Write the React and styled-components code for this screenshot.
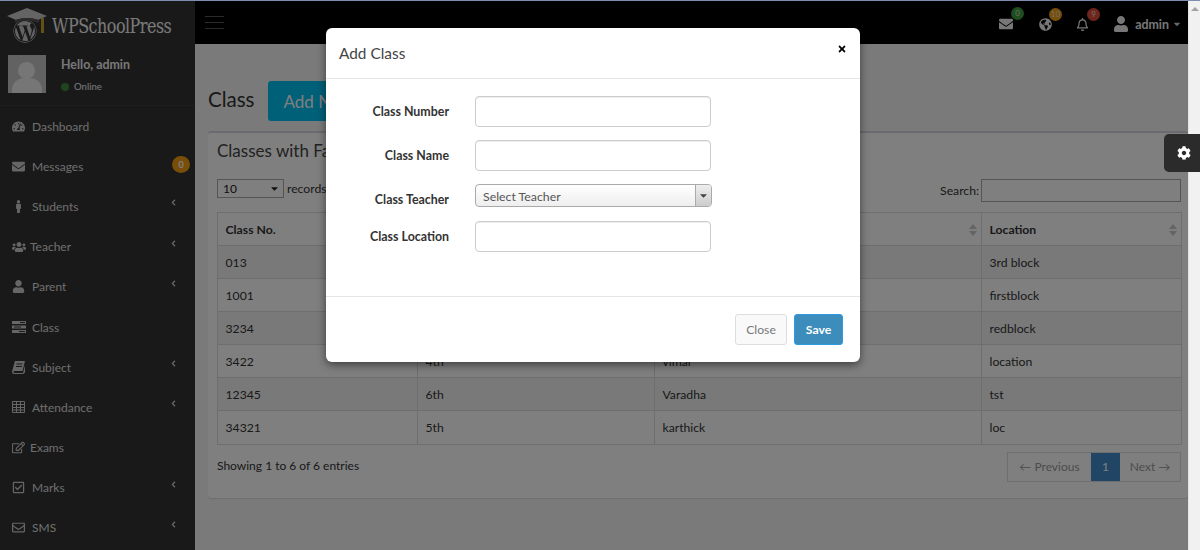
import React from "react";
import styled, { createGlobalStyle } from "styled-components";
import {
  FaCaretDown,
  FaChevronLeft,
  FaCog,
  FaEnvelope,
  FaGlobeAmericas,
  FaMale,
  FaRegBell,
  FaRegCheckSquare,
  FaRegEdit,
  FaRegEnvelope,
  FaTachometerAlt,
  FaTimes,
  FaUser,
  FaUsers,
  FaWordpress,
} from "react-icons/fa";

const font = `Lato, "Noto Sans", sans-serif`;

const GlobalStyle = createGlobalStyle`
  html, body {
    margin: 0;
    height: 100%;
    overflow: hidden;
    background: #f1f1f1;
    font-family: ${font};
  }
  * { box-sizing: border-box; }
`;

const Screen = styled.div`
  position: relative;
  display: flex;
  width: 1200px;
  height: 550px;
  overflow: hidden;
  border-top: 1px solid #7f8db0;
`;

const Page = styled.div`
  position: relative;
  display: flex;
  width: 1188px;
  height: 100%;
  background: #f4f4f4;
`;

const Scrollbar = styled.div`
  display: flex;
  justify-content: center;
  width: 12px;
  padding-top: 6px;
  background: #f1f1f1;
  border-left: 1px solid #e4e4e4;
`;

const ScrollArrow = styled.span`
  width: 0;
  height: 0;
  border-left: 4px solid transparent;
  border-right: 4px solid transparent;
  border-bottom: 4px solid #a3a3a3;
`;

const Sidebar = styled.aside`
  flex: 0 0 195px;
  background: #333;
  overflow: hidden;
`;

const Brand = styled.div`
  display: flex;
  align-items: flex-start;
  height: 48px;
  padding: 7px 0 0 7px;
`;

const LogoMark = styled.div`
  position: relative;
  width: 40px;
  height: 35px;
  color: #c8c8c8;
  flex: none;
`;

const LogoCap = styled.svg`
  position: absolute;
  left: 0;
  top: 0;
`;

const LogoW = styled(FaWordpress)`
  position: absolute;
  left: 6px;
  top: 11px;
  font-size: 24px;
  color: #c8c8c8;
  background: #333;
  border-radius: 50%;
`;

const BrandName = styled.span`
  margin: 4px 0 0 5px;
  font-family: "DejaVu Serif Condensed", "DejaVu Serif", serif;
  font-size: 21px;
  line-height: 28px;
  color: #f2f2f2;
  letter-spacing: -0.6px;
  white-space: nowrap;
  transform: scaleX(0.845);
  transform-origin: left center;
`;

const UserPanel = styled.div`
  display: flex;
  height: 57px;
  padding: 6px 0 0 8px;
  border-bottom: 1px solid #3d3d3d;
`;

const AvatarBox = styled.div`
  position: relative;
  width: 38px;
  height: 38px;
  background: #c4c4c4;
  overflow: hidden;
  flex: none;
`;

const AvatarHead = styled.span`
  position: absolute;
  left: 10px;
  top: 7px;
  width: 17px;
  height: 17px;
  border-radius: 50%;
  background: #ececec;
`;

const AvatarBody = styled.span`
  position: absolute;
  left: 4px;
  top: 23px;
  width: 30px;
  height: 20px;
  border-radius: 12px 12px 0 0;
  background: #ececec;
`;

const UserInfo = styled.div`
  margin-left: 15px;
  color: #eee;
`;

const UserName = styled.div`
  font-size: 12.4px;
  font-weight: 700;
  line-height: 20px;
`;

const UserStatus = styled.div`
  display: flex;
  align-items: center;
  gap: 5px;
  margin-top: 4px;
  font-size: 9.6px;
  line-height: 16px;
`;

const StatusDot = styled.span`
  width: 8px;
  height: 8px;
  border-radius: 50%;
  background: #3c8a3c;
`;

const Menu = styled.nav`
  padding-top: 0;
`;

const MenuItem = styled.div`
  position: relative;
  display: flex;
  align-items: center;
  height: 40.2px;
  padding-left: 12px;
  font-size: 12px;
  color: #ddd;
`;

const MenuIcon = styled.span`
  display: flex;
  align-items: center;
  width: ${(p) => (p.$narrow ? "18px" : "20px")};
  font-size: ${(p) => (p.$large ? "14px" : "13px")};
  color: #ccc;
`;

const MenuChevron = styled(FaChevronLeft)`
  position: absolute;
  right: 18px;
  top: 13px;
  font-size: 7px;
  color: #ddd;
`;

const MenuBadge = styled.span`
  position: absolute;
  right: 5px;
  top: 10px;
  width: 18px;
  height: 17px;
  border-radius: 50%;
  background: #f39c12;
  color: #fff;
  font-size: 9px;
  font-weight: 700;
  line-height: 17px;
  text-align: center;
`;

const Main = styled.main`
  flex: 1;
  min-width: 0;
`;

const TopBar = styled.header`
  display: flex;
  align-items: center;
  justify-content: space-between;
  height: 43px;
  background: #000;
  padding: 0 6px 0 10px;
`;

const Burger = styled.div`
  display: flex;
  flex-direction: column;
  gap: 5px;
  width: 19px;
`;

const BurgerLine = styled.span`
  height: 1px;
  background: #555;
`;

const TopIcons = styled.div`
  display: flex;
  align-items: center;
  padding-top: 3px;
  color: #eee;
`;

const TopIcon = styled.div`
  position: relative;
  display: flex;
  margin-right: ${(p) => p.$gap}px;
  font-size: ${(p) => p.$size || 13}px;
`;

const TopBadge = styled.span`
  position: absolute;
  left: ${(p) => p.$left}px;
  top: -10px;
  width: 13px;
  height: 13px;
  border-radius: 50%;
  background: ${(p) => p.$color};
  color: #ddd;
  font-size: 8px;
  line-height: 13px;
  text-align: center;
`;

const TopUser = styled.div`
  display: flex;
  align-items: center;
  gap: 6px;
  font-size: 12.4px;
  font-weight: 700;
`;

const TopUserIcon = styled(FaUser)`
  font-size: 16px;
`;

const Caret = styled(FaCaretDown)`
  margin-left: -3px;
  font-size: 10px;
  color: #ccc;
`;

const Content = styled.div`
  padding: 37px 0 0 13px;
`;

const TitleRow = styled.div`
  display: flex;
  align-items: center;
  gap: 14px;
  height: 40px;
`;

const PageTitle = styled.h1`
  margin: -5px 0 0;
  font-size: 20.5px;
  font-weight: 400;
  color: #333;
`;

const AddButton = styled.button`
  width: 110px;
  height: 40px;
  padding: 0 0 0 15px;
  border: 0;
  border-radius: 3px;
  background: #00c0ef;
  color: #fff;
  font-family: ${font};
  font-size: 17px;
  text-align: left;
  white-space: nowrap;
`;

const Box = styled.section`
  height: 367px;
  margin-top: 10px;
  padding: 0 7px 0 9px;
  background: #fff;
  border-top: 2px solid #d2d6de;
  border-radius: 3px;
  box-shadow: 0 1px 1px rgba(0, 0, 0, 0.1);
`;

const BoxTitle = styled.h3`
  margin: 0;
  padding-top: 6px;
  font-size: 17px;
  line-height: 24px;
  font-weight: 400;
  color: #444;
  white-space: nowrap;
`;

const TableTools = styled.div`
  display: flex;
  align-items: flex-start;
  justify-content: space-between;
  margin-top: 16px;
  font-size: 12.2px;
  color: #333;
`;

const LengthControl = styled.div`
  display: flex;
  align-items: center;
  gap: 3px;
`;

const LengthSelect = styled.div`
  display: flex;
  align-items: center;
  justify-content: space-between;
  width: 67px;
  height: 19px;
  padding: 0 3px 0 5px;
  background: #fff;
  border: 1px solid #aaa;
  font-size: 12px;
  color: #222;
`;

const SearchControl = styled.label`
  display: flex;
  align-items: center;
  gap: 2px;
`;

const SearchInput = styled.div`
  width: 200px;
  height: 23px;
  background: #fff;
  border: 1px solid #aaa;
`;

const DataTable = styled.table`
  width: 964px;
  margin-top: 10px;
  border-collapse: collapse;
  table-layout: fixed;
  font-size: 12.2px;
  color: #333;

  th, td {
    height: 33.1px;
    padding: 0 7.5px;
    border: 1px solid #ddd;
    text-align: left;
  }
  th { position: relative; height: 33px; font-weight: 700; }
  tbody tr:nth-child(odd) td { background: #f3f3f3; }
`;

const SortIcon = styled.span`
  position: absolute;
  right: 4px;
  top: 11px;
  display: flex;
  flex-direction: column;
  gap: 2px;

  &::before, &::after {
    content: "";
    border-left: 4px solid transparent;
    border-right: 4px solid transparent;
  }
  &::before { border-bottom: 5px solid #c8c8c8; }
  &::after { border-top: 5px solid #c8c8c8; }
`;

const TableFooter = styled.div`
  display: flex;
  align-items: flex-start;
  justify-content: space-between;
  margin-top: 7px;
  font-size: 12px;
  color: #333;
`;

const FooterText = styled.div`
  margin-top: 6px;
`;

const Pager = styled.div`
  display: flex;
  height: 30px;
  border: 1px solid #ddd;
  color: #999;
`;

const PagerItem = styled.span`
  display: flex;
  align-items: center;
  justify-content: center;
  width: ${(p) => p.$width}px;
  background: ${(p) => (p.$active ? "#428bca" : "transparent")};
  color: ${(p) => (p.$active ? "#fff" : "#999")};
`;

const GearTab = styled.div`
  position: absolute;
  top: 133px;
  left: 1164px;
  display: flex;
  align-items: center;
  justify-content: center;
  width: 36px;
  height: 38px;
  padding-left: 4px;
  background: #2b2b2b;
  border-radius: 5px 0 0 5px;
  color: #fff;
  font-size: 14px;
  z-index: 3;
`;

const Backdrop = styled.div`
  position: absolute;
  inset: -1px 0 0 0;
  background: rgba(0, 0, 0, 0.5);
  z-index: 1;
`;

const Modal = styled.div`
  position: absolute;
  left: 326px;
  top: 27px;
  width: 534px;
  height: 334px;
  background: #fff;
  border-radius: 6px;
  box-shadow: 0 3px 9px rgba(0, 0, 0, 0.5);
  z-index: 2;
`;

const ModalHeader = styled.div`
  display: flex;
  justify-content: space-between;
  height: 51px;
  padding: 15px 13px;
  border-bottom: 1px solid #e5e5e5;
`;

const ModalTitle = styled.h4`
  margin: 0;
  font-size: 15.4px;
  line-height: 21px;
  font-weight: 400;
  color: #444;
`;

const CloseX = styled(FaTimes)`
  margin: 1px 0 0;
  font-size: 10px;
  color: #000;
`;

const ModalBody = styled.div`
  display: flex;
  flex-direction: column;
  height: 218px;
  padding-top: 17px;
  border-bottom: 1px solid #e5e5e5;
`;

const FieldRow = styled.div`
  display: flex;
  align-items: center;
  margin-bottom: ${(p) => p.$gap}px;
`;

const FieldLabel = styled.label`
  width: 123px;
  padding-top: ${(p) => p.$drop || 0}px;
  font-size: 12.4px;
  font-weight: 700;
  color: #333;
  text-align: right;
`;

const FieldInput = styled.div`
  width: 236px;
  height: 31px;
  margin-left: 26px;
  border: 1px solid #ccc;
  border-radius: 4px;
  box-shadow: inset 0 1px 1px rgba(0, 0, 0, 0.075);
`;

const FieldSelect = styled.div`
  display: flex;
  align-items: center;
  justify-content: space-between;
  width: 237px;
  height: 23px;
  margin-left: 26px;
  padding-left: 7px;
  background: linear-gradient(#fff, #eee);
  border: 1px solid #aaa;
  border-radius: 4px;
  font-size: 12.3px;
  color: #555;
`;

const SelectText = styled.span`
  padding-top: 2px;
`;

const SelectArrow = styled.span`
  display: flex;
  align-items: center;
  justify-content: center;
  width: 16px;
  height: 100%;
  background: linear-gradient(#eee, #ccc);
  border-left: 1px solid #aaa;
  border-radius: 0 3px 3px 0;
  font-size: 11px;
  color: #444;
`;

const ModalFooter = styled.div`
  display: flex;
  justify-content: flex-end;
  gap: 7px;
  padding: 17px 17px 0 0;
`;

const FooterButton = styled.button`
  width: ${(p) => p.$width}px;
  height: 31px;
  padding: 0;
  background: ${(p) => (p.$primary ? "#3c8dbc" : "#f9f9f9")};
  border: 1px solid ${(p) => (p.$primary ? "#2e9be0" : "#ddd")};
  border-radius: 3px;
  color: ${(p) => (p.$primary ? "#fff" : "#777")};
  font-family: ${font};
  font-size: 12.2px;
  font-weight: ${(p) => (p.$primary ? 700 : 400)};
`;

const ClassIcon = () => (
  <svg width="14" height="12" viewBox="0 0 14 12" fill="currentColor">
    <path d="M0 0h14v3H0zM0 4.5h14v3H0zM0 9h14v3H0z" />
    <path d="M8 1h5v1H8zM2 5.5h7v1H2zM7 10h6v1H7z" fill="#333" />
  </svg>
);

const BookIcon = () => (
  <svg width="13" height="13" viewBox="0 0 13 13" fill="currentColor">
    <path d="M3 0h10L10.5 10H2.5a1 1 0 0 0 0 2h8.5L13 4.5v7L11 13H2Q0 13 0 10.5z" />
    <path d="M4.5 2.5h6v1h-6zM4 5h6v1H4z" fill="#333" />
  </svg>
);

const TableIcon = () => (
  <svg width="13" height="12" viewBox="0 0 13 12" fill="none" stroke="currentColor">
    <path d="M.5.5h12v11H.5zM.5 3.5h12M.5 6.5h12M.5 9h12M4.5.5v11M8.5.5v11" />
  </svg>
);

const menu = [
  { label: "Dashboard", Icon: FaTachometerAlt },
  { label: "Messages", Icon: FaEnvelope, badge: "0" },
  { label: "Students", Icon: FaMale, sub: true },
  { label: "Teacher", Icon: FaUsers, sub: true, narrow: true, large: true },
  { label: "Parent", Icon: FaUser, sub: true },
  { label: "Class", Icon: ClassIcon },
  { label: "Subject", Icon: BookIcon, sub: true },
  { label: "Attendance", Icon: TableIcon, sub: true },
  { label: "Exams", Icon: FaRegEdit, narrow: true },
  { label: "Marks", Icon: FaRegCheckSquare, sub: true },
  { label: "SMS", Icon: FaRegEnvelope, sub: true },
];

const rows = [
  ["013", "", "", "3rd block"],
  ["1001", "", "", "firstblock"],
  ["3234", "", "", "redblock"],
  ["3422", "4th", "vimal", "location"],
  ["12345", "6th", "Varadha", "tst"],
  ["34321", "5th", "karthick", "loc"],
];

const Logo = () => (
  <LogoMark>
    <LogoW />
    <LogoCap width="40" height="26" viewBox="0 0 40 26">
      <path d="M20 0 L40 8 L31 12 Q20 8 9 12 L0 8 Z" fill="currentColor" />
      <path d="M8 12 Q20 8 32 12 V15 Q20 10 8 15 Z" fill="#555" />
      <path d="M35.5 10 V25" stroke="#c9a227" strokeWidth="3" />
    </LogoCap>
  </LogoMark>
);

export default function App() {
  return (
    <>
      <GlobalStyle />
      <Screen>
        <Page>
          <Sidebar>
            <Brand>
              <Logo />
              <BrandName>WPSchoolPress</BrandName>
            </Brand>
            <UserPanel>
              <AvatarBox>
                <AvatarHead />
                <AvatarBody />
              </AvatarBox>
              <UserInfo>
                <UserName>Hello, admin</UserName>
                <UserStatus>
                  <StatusDot />
                  Online
                </UserStatus>
              </UserInfo>
            </UserPanel>
            <Menu>
              {menu.map(({ label, Icon, sub, badge, narrow, large }) => (
                <MenuItem key={label}>
                  <MenuIcon $narrow={narrow} $large={large}>
                    <Icon />
                  </MenuIcon>
                  {label}
                  {sub && <MenuChevron />}
                  {badge && <MenuBadge>{badge}</MenuBadge>}
                </MenuItem>
              ))}
            </Menu>
          </Sidebar>
          <Main>
            <TopBar>
              <Burger>
                <BurgerLine />
                <BurgerLine />
                <BurgerLine />
              </Burger>
              <TopIcons>
                <TopIcon $gap={26} $size={14}>
                  <FaEnvelope />
                  <TopBadge $left={12} $color="#3c9a3c">0</TopBadge>
                </TopIcon>
                <TopIcon $gap={24}>
                  <FaGlobeAmericas />
                  <TopBadge $left={10} $color="#f39c12">10</TopBadge>
                </TopIcon>
                <TopIcon $gap={24}>
                  <FaRegBell />
                  <TopBadge $left={11} $color="#dd4b39">9</TopBadge>
                </TopIcon>
                <TopUser>
                  <TopUserIcon />
                  admin
                  <Caret />
                </TopUser>
              </TopIcons>
            </TopBar>
            <Content>
              <TitleRow>
                <PageTitle>Class</PageTitle>
                <AddButton>Add New</AddButton>
              </TitleRow>
              <Box>
                <BoxTitle>Classes with Faculty</BoxTitle>
                <TableTools>
                  <LengthControl>
                    <LengthSelect>
                      10
                      <FaCaretDown size={11} />
                    </LengthSelect>
                    records
                  </LengthControl>
                  <SearchControl>
                    Search:
                    <SearchInput />
                  </SearchControl>
                </TableTools>
                <DataTable>
                  <colgroup>
                    <col width="200" />
                    <col width="237" />
                    <col width="327" />
                    <col width="200" />
                  </colgroup>
                  <thead>
                    <tr>
                      <th>Class No.<SortIcon /></th>
                      <th><SortIcon /></th>
                      <th><SortIcon /></th>
                      <th>Location<SortIcon /></th>
                    </tr>
                  </thead>
                  <tbody>
                    {rows.map((row) => (
                      <tr key={row[0]}>
                        {row.map((cell, i) => (
                          <td key={i}>{cell}</td>
                        ))}
                      </tr>
                    ))}
                  </tbody>
                </DataTable>
                <TableFooter>
                  <FooterText>Showing 1 to 6 of 6 entries</FooterText>
                  <Pager>
                    <PagerItem $width={83}>← Previous</PagerItem>
                    <PagerItem $width={29} $active>1</PagerItem>
                    <PagerItem $width={60}>Next →</PagerItem>
                  </Pager>
                </TableFooter>
              </Box>
            </Content>
          </Main>
          <Backdrop />
          <Modal>
            <ModalHeader>
              <ModalTitle>Add Class</ModalTitle>
              <CloseX />
            </ModalHeader>
            <ModalBody>
              <FieldRow $gap={13}>
                <FieldLabel>Class Number</FieldLabel>
                <FieldInput />
              </FieldRow>
              <FieldRow $gap={13}>
                <FieldLabel>Class Name</FieldLabel>
                <FieldInput />
              </FieldRow>
              <FieldRow $gap={14}>
                <FieldLabel $drop={7}>Class Teacher</FieldLabel>
                <FieldSelect>
                  <SelectText>Select Teacher</SelectText>
                  <SelectArrow>
                    <FaCaretDown />
                  </SelectArrow>
                </FieldSelect>
              </FieldRow>
              <FieldRow $gap={0}>
                <FieldLabel>Class Location</FieldLabel>
                <FieldInput />
              </FieldRow>
            </ModalBody>
            <ModalFooter>
              <FooterButton $width={52}>Close</FooterButton>
              <FooterButton $width={49} $primary>Save</FooterButton>
            </ModalFooter>
          </Modal>
        </Page>
        <Scrollbar>
          <ScrollArrow />
        </Scrollbar>
        <GearTab>
          <FaCog />
        </GearTab>
      </Screen>
    </>
  );
}
